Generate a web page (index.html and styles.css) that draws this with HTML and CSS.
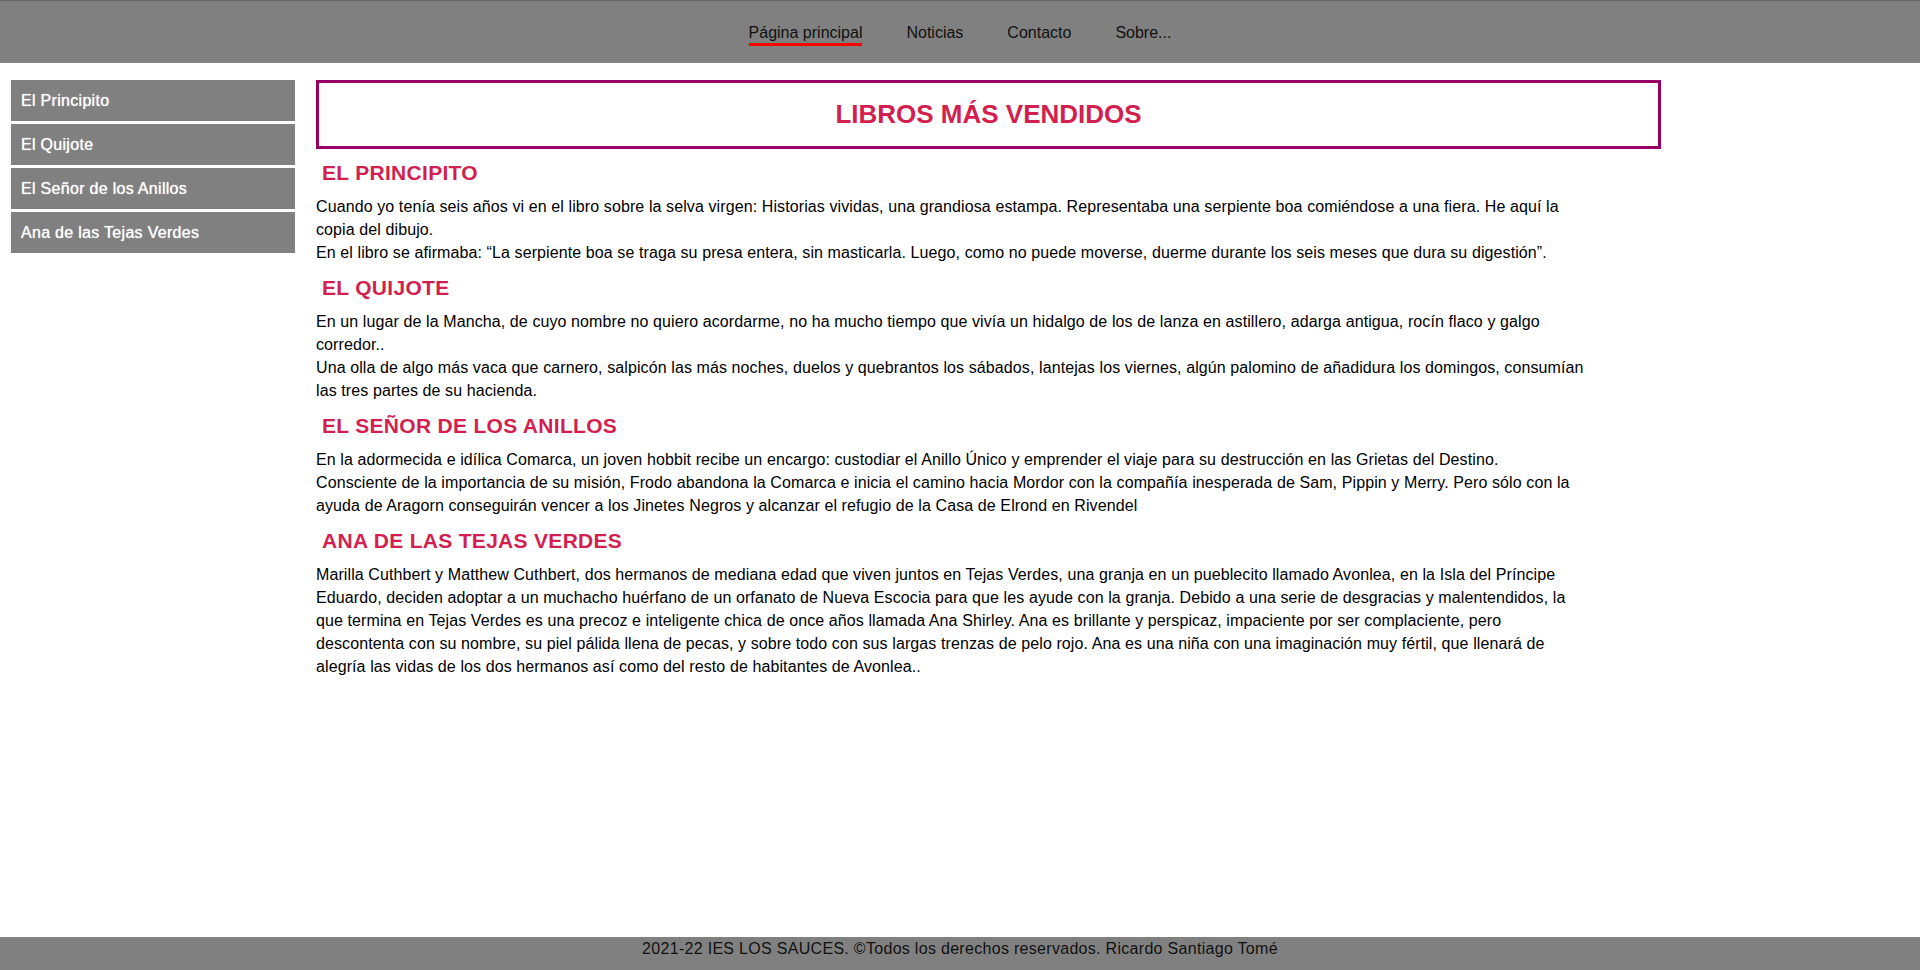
FILE: index.html
```html
<!DOCTYPE html>
<html lang="es">
<head>
<meta charset="utf-8">
<title>Libros más vendidos</title>
<link rel="stylesheet" href="styles.css">
</head>
<body>
<header class="top">
  <nav class="nav">
    <a class="nav-link active" href="#">Página principal</a>
    <a class="nav-link" href="#">Noticias</a>
    <a class="nav-link" href="#">Contacto</a>
    <a class="nav-link" href="#">Sobre...</a>
  </nav>
</header>
<div class="layout">
  <aside class="side">
    <a class="side-item" href="#principito">El Principito</a>
    <a class="side-item" href="#quijote">El Quijote</a>
    <a class="side-item" href="#anillos">El Señor de los Anillos</a>
    <a class="side-item" href="#ana">Ana de las Tejas Verdes</a>
  </aside>
  <main class="main">
    <div class="title-box"><h1 class="title">LIBROS MÁS VENDIDOS</h1></div>
    <section id="principito">
      <h2 class="book">EL PRINCIPITO</h2>
      <p class="text">Cuando yo tenía seis años vi en el libro sobre la selva virgen: Historias vividas, una grandiosa estampa. Representaba una serpiente boa comiéndose a una fiera. He aquí la copia del dibujo.<br>En el libro se afirmaba: “La serpiente boa se traga su presa entera, sin masticarla. Luego, como no puede moverse, duerme durante los seis meses que dura su digestión”.</p>
    </section>
    <section id="quijote">
      <h2 class="book">EL QUIJOTE</h2>
      <p class="text">En un lugar de la Mancha, de cuyo nombre no quiero acordarme, no ha mucho tiempo que vivía un hidalgo de los de lanza en astillero, adarga antigua, rocín flaco y galgo corredor..<br>Una olla de algo más vaca que carnero, salpicón las más noches, duelos y quebrantos los sábados, lantejas los viernes, algún palomino de añadidura los domingos, consumían las tres partes de su hacienda.</p>
    </section>
    <section id="anillos">
      <h2 class="book">EL SEÑOR DE LOS ANILLOS</h2>
      <p class="text">En la adormecida e idílica Comarca, un joven hobbit recibe un encargo: custodiar el Anillo Único y emprender el viaje para su destrucción en las Grietas del Destino.<br>Consciente de la importancia de su misión, Frodo abandona la Comarca e inicia el camino hacia Mordor con la compañía inesperada de Sam, Pippin y Merry. Pero sólo con la ayuda de Aragorn conseguirán vencer a los Jinetes Negros y alcanzar el refugio de la Casa de Elrond en Rivendel</p>
    </section>
    <section id="ana">
      <h2 class="book">ANA DE LAS TEJAS VERDES</h2>
      <p class="text">Marilla Cuthbert y Matthew Cuthbert, dos hermanos de mediana edad que viven juntos en Tejas Verdes, una granja en un pueblecito llamado Avonlea, en la Isla del Príncipe Eduardo, deciden adoptar a un muchacho huérfano de un orfanato de Nueva Escocia para que les ayude con la granja. Debido a una serie de desgracias y malentendidos, la que termina en Tejas Verdes es una precoz e inteligente chica de once años llamada Ana Shirley. Ana es brillante y perspicaz, impaciente por ser complaciente, pero descontenta con su nombre, su piel pálida llena de pecas, y sobre todo con sus largas trenzas de pelo rojo. Ana es una niña con una imaginación muy fértil, que llenará de alegría las vidas de los dos hermanos así como del resto de habitantes de Avonlea..</p>
    </section>
  </main>
</div>
<footer class="foot">2021-22 IES LOS SAUCES. ©Todos los derechos reservados. Ricardo Santiago Tomé</footer>
</body>
</html>
```
FILE: styles.css
```css
* { box-sizing: border-box; }
html, body { margin: 0; padding: 0; }
body {
  font-family: "Comic Sans MS", "Liberation Sans", sans-serif;
  font-size: 16px;
  color: #000;
  background: #fff;
  min-height: 100vh;
  display: flex;
  flex-direction: column;
}
.top {
  height: 63px;
  background: #808080;
  border-top: 1px solid #666;
  display: flex;
  justify-content: center;
}
.nav {
  display: flex;
  gap: 44px;
  align-items: flex-start;
  padding-top: 22px;
}
.nav-link {
  color: #111;
  text-decoration: none;
  line-height: 20px;
  border-bottom: 3px solid transparent;
}
.nav-link.active { border-bottom-color: #ff0000; }
.layout {
  display: flex;
  align-items: flex-start;
  padding: 17px 11px;
}
.side {
  width: 284px;
  flex: none;
  display: flex;
  flex-direction: column;
  gap: 3px;
}
.side-item {
  height: 41px;
  background: #808080;
  color: #fff;
  text-decoration: none;
  display: flex;
  align-items: center;
  padding-left: 10px;
  letter-spacing: 0.3px;
  text-shadow: 0 0 1px #eee;
}
.main {
  width: 1345px;
  margin-left: 21px;
  flex: none;
}
.title-box {
  border: 3px solid #990066;
  height: 69px;
  display: flex;
  align-items: center;
  justify-content: center;
}
.title {
  margin: 0;
  font-size: 26px;
  font-weight: bold;
  color: #d21f50;
}
.book {
  margin: 10px 0 8px;
  padding-left: 6px;
  font-size: 21px;
  letter-spacing: 0.3px;
  line-height: 28px;
  font-weight: bold;
  color: #d21f50;
}
.text {
  margin: 0;
  width: 1276px;
  line-height: 23px;
  letter-spacing: 0.1px;
}
.foot {
  margin-top: auto;
  height: 33px;
  background: #808080;
  color: #111;
  text-align: center;
  line-height: 24px;
  letter-spacing: 0.3px;
}
```
